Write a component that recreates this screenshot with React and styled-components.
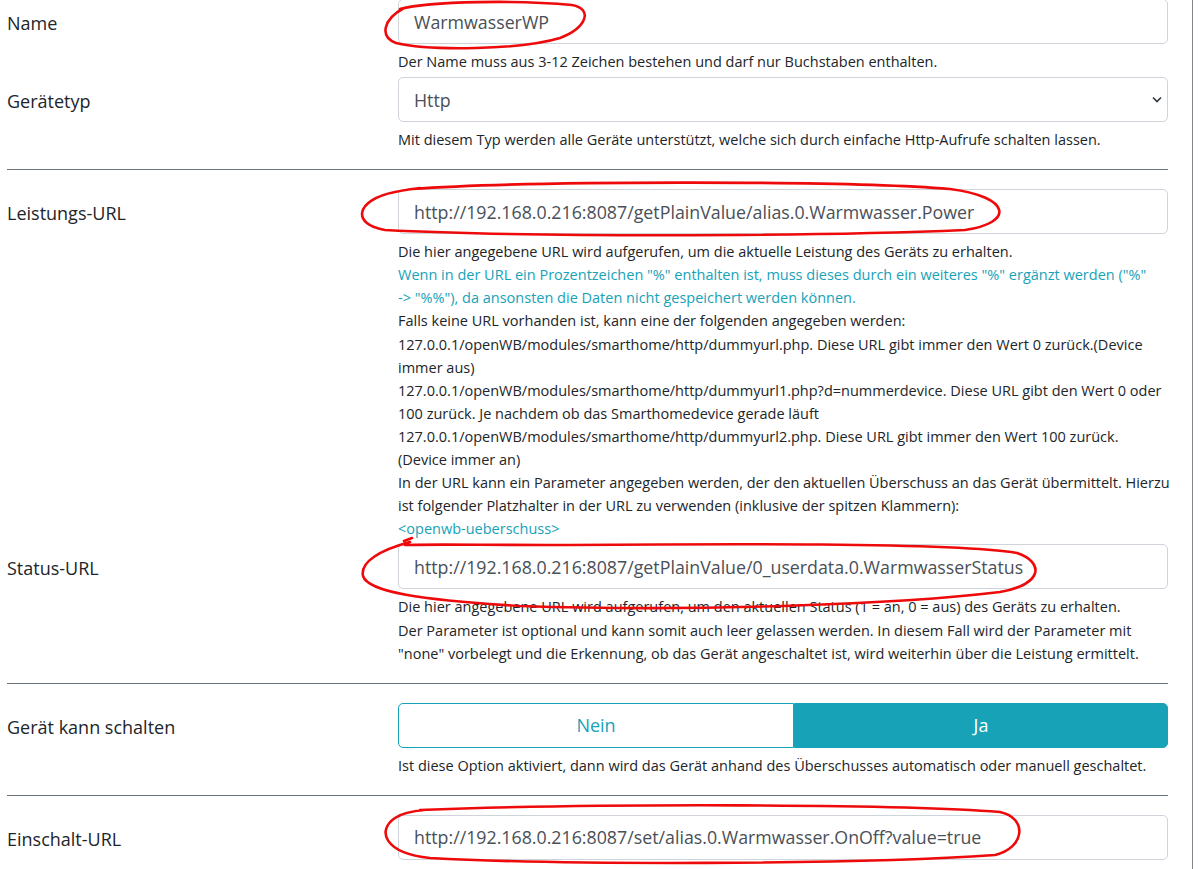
import React from "react";
import styled, { createGlobalStyle } from "styled-components";

const GlobalStyle = createGlobalStyle`
  html, body {
    margin: 0;
    padding: 0;
    background: #fff;
  }
  body {
    font-family: "Open Sans", "Liberation Sans", sans-serif;
    color: #212529;
  }
`;

const Page = styled.div`
  position: relative;
  width: 1193px;
  height: 869px;
  overflow: hidden;
  border-right: 1px solid #80868c;
  box-sizing: border-box;
`;

const Form = styled.div`
  width: 1161px;
  padding-left: 7px;
  margin-top: -1px;
`;

const Row = styled.div`
  display: grid;
  grid-template-columns: 391px 770px;
  margin-bottom: 4px;
`;

const Label = styled.label`
  height: 45px;
  padding-top: 2px;
  box-sizing: border-box;
  line-height: 45px;
  font-size: 18px;
`;

const Control = styled.div`
  display: flex;
  flex-direction: column;
`;

const Field = styled.div`
  position: relative;
  height: 45px;
`;

const Input = styled.input`
  box-sizing: border-box;
  width: 100%;
  height: 45px;
  padding: 0 15px;
  border: 1px solid #ced4da;
  border-radius: 5px;
  font-family: inherit;
  font-size: 17.8px;
  color: #495057;
  background: #fff;
  outline: none;
`;

const Chevron = styled.svg`
  position: absolute;
  right: 6px;
  top: 19px;
`;

const Help = styled.div`
  margin-top: 6px;
  font-size: 14.5px;
  line-height: 23.1px;
`;

const Line = styled.div`
  white-space: nowrap;
  color: ${(p) => (p.$info ? "#17a2b8" : "#212529")};
`;

const Divider = styled.hr`
  width: 1161px;
  margin: 18px 0 19px;
  border: 0;
  border-top: 1px solid #6c757d;
`;

const Toggle = styled.div`
  display: flex;
  height: 45px;
`;

const ToggleButton = styled.button`
  box-sizing: border-box;
  flex: 0 0 ${(p) => p.$width}px;
  height: 45px;
  border: 1px solid #17a2b8;
  font-family: inherit;
  font-size: 18px;
  background: ${(p) => (p.$active ? "#17a2b8" : "#fff")};
  color: ${(p) => (p.$active ? "#fff" : "#17a2b8")};
  border-radius: ${(p) => (p.$first ? "5px 0 0 5px" : "0 5px 5px 0")};
`;

const Marks = styled.svg`
  position: absolute;
  top: 0;
  left: 0;
  pointer-events: none;
`;

const FormRow = ({ label, children, help }) => (
  <Row>
    <Label>{label}</Label>
    <Control>
      {children}
      {help && (
        <Help>
          {help.map((l, i) => (
            <Line key={i} $info={l.info}>
              {l.text}
            </Line>
          ))}
        </Help>
      )}
    </Control>
  </Row>
);

const t = (text, info) => ({ text, info });

export default function App() {
  return (
    <Page>
      <GlobalStyle />
      <Form>
        <FormRow
          label="Name"
          help={[t("Der Name muss aus 3-12 Zeichen bestehen und darf nur Buchstaben enthalten.")]}
        >
          <Field>
            <Input readOnly value="WarmwasserWP" />
          </Field>
        </FormRow>
        <FormRow
          label="Gerätetyp"
          help={[t("Mit diesem Typ werden alle Geräte unterstützt, welche sich durch einfache Http-Aufrufe schalten lassen.")]}
        >
          <Field>
            <Input readOnly value="Http" />
            <Chevron width="10" height="7" viewBox="0 0 10 7">
              <path d="M1 1.5 5 5.5l4-4" fill="none" stroke="#343a40" strokeWidth="1.7" />
            </Chevron>
          </Field>
        </FormRow>
        <Divider />
        <FormRow
          label="Leistungs-URL"
          help={[
            t("Die hier angegebene URL wird aufgerufen, um die aktuelle Leistung des Geräts zu erhalten."),
            t('Wenn in der URL ein Prozentzeichen "%" enthalten ist, muss dieses durch ein weiteres "%" ergänzt werden ("%"', true),
            t('-> "%%"), da ansonsten die Daten nicht gespeichert werden können.', true),
            t("Falls keine URL vorhanden ist, kann eine der folgenden angegeben werden:"),
            t("127.0.0.1/openWB/modules/smarthome/http/dummyurl.php. Diese URL gibt immer den Wert 0 zurück.(Device"),
            t("immer aus)"),
            t("127.0.0.1/openWB/modules/smarthome/http/dummyurl1.php?d=nummerdevice. Diese URL gibt den Wert 0 oder"),
            t("100 zurück. Je nachdem ob das Smarthomedevice gerade läuft"),
            t("127.0.0.1/openWB/modules/smarthome/http/dummyurl2.php. Diese URL gibt immer den Wert 100 zurück."),
            t("(Device immer an)"),
            t("In der URL kann ein Parameter angegeben werden, der den aktuellen Überschuss an das Gerät übermittelt. Hierzu"),
            t("ist folgender Platzhalter in der URL zu verwenden (inklusive der spitzen Klammern):"),
            t("<openwb-ueberschuss>", true),
          ]}
        >
          <Field>
            <Input readOnly value="http://192.168.0.216:8087/getPlainValue/alias.0.Warmwasser.Power" />
          </Field>
        </FormRow>
        <FormRow
          label="Status-URL"
          help={[
            t("Die hier angegebene URL wird aufgerufen, um den aktuellen Status (1 = an, 0 = aus) des Geräts zu erhalten."),
            t("Der Parameter ist optional und kann somit auch leer gelassen werden. In diesem Fall wird der Parameter mit"),
            t('"none" vorbelegt und die Erkennung, ob das Gerät angeschaltet ist, wird weiterhin über die Leistung ermittelt.'),
          ]}
        >
          <Field>
            <Input readOnly value="http://192.168.0.216:8087/getPlainValue/0_userdata.0.WarmwasserStatus" />
          </Field>
        </FormRow>
        <Divider />
        <FormRow
          label="Gerät kann schalten"
          help={[t("Ist diese Option aktiviert, dann wird das Gerät anhand des Überschusses automatisch oder manuell geschaltet.")]}
        >
          <Toggle>
            <ToggleButton $first $width={396}>Nein</ToggleButton>
            <ToggleButton $active $width={374}>Ja</ToggleButton>
          </Toggle>
        </FormRow>
        <Divider />
        <FormRow label="Einschalt-URL">
          <Field>
            <Input readOnly value="http://192.168.0.216:8087/set/alias.0.Warmwasser.OnOff?value=true" />
          </Field>
        </FormRow>
      </Form>
      <Marks width="1192" height="869" viewBox="0 0 1192 869">
        <g fill="none" stroke="#ee0a0a" strokeWidth="2.6" strokeLinecap="round">
          <path d="M400 9 C430 1 520 0 572 5 C594 9 586 28 560 38 C520 50 430 51 396 43 C380 37 382 20 404 8" />
          <path d="M412 189 C520 181 840 180 950 189 C1012 197 1014 223 965 230 C800 237 520 237 385 230 C352 225 354 200 395 192 C405 190 410 189 420 188" />
          <path d="M404 541 L412 538 M410 542 C380 550 360 562 363 576 C368 592 420 600 520 606 C700 612 900 604 1000 592 C1044 584 1044 562 1017 553 C950 542 700 544 560 545 C480 545 430 544 405 545" />
          <path d="M420 810 C600 803 900 804 1000 812 C1028 818 1025 848 995 855 C850 865 560 865 430 858 C383 853 377 830 395 818 C402 813 412 811 425 810" />
        </g>
      </Marks>
    </Page>
  );
}
